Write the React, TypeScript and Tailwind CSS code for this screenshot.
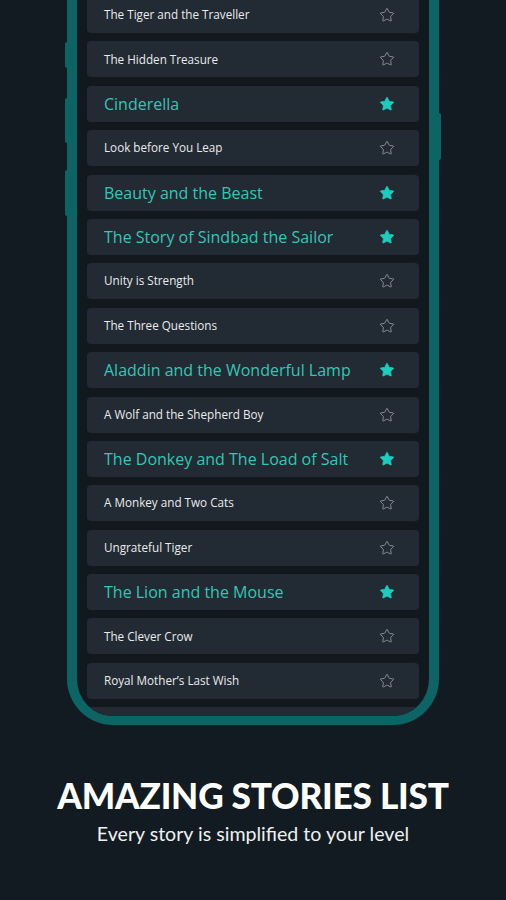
import { Star } from 'lucide-react';

interface Story {
  title: string;
  fav: boolean;
}

const stories: Story[] = [
  { title: 'The Tiger and the Traveller', fav: false },
  { title: 'The Hidden Treasure', fav: false },
  { title: 'Cinderella', fav: true },
  { title: 'Look before You Leap', fav: false },
  { title: 'Beauty and the Beast', fav: true },
  { title: 'The Story of Sindbad the Sailor', fav: true },
  { title: 'Unity is Strength', fav: false },
  { title: 'The Three Questions', fav: false },
  { title: 'Aladdin and the Wonderful Lamp', fav: true },
  { title: 'A Wolf and the Shepherd Boy', fav: false },
  { title: 'The Donkey and The Load of Salt', fav: true },
  { title: 'A Monkey and Two Cats', fav: false },
  { title: 'Ungrateful Tiger', fav: false },
  { title: 'The Lion and the Mouse', fav: true },
  { title: 'The Clever Crow', fav: false },
  { title: 'Royal Mother\u2019s Last Wish', fav: false },
  { title: '', fav: false },
];

function StoryRow({ story }: { story: Story }) {
  return (
    <div className="flex items-center justify-between h-[36px] shrink-0 rounded-[4px] bg-[#222a33] pl-[17px] pr-[24px]">
      {story.fav ? (
        <span className="text-[16px] text-[#34c6b6] leading-none">{story.title}</span>
      ) : (
        <span className="text-[11.7px] text-[#e9ebed] leading-none">{story.title}</span>
      )}
      {story.title &&
        (story.fav ? (
          <Star size={16} strokeWidth={1.2} className="text-[#1ccdbd] fill-[#1ccdbd]" />
        ) : (
          <Star size={16} strokeWidth={1.15} className="text-[#a3a8ad]" />
        ))}
    </div>
  );
}

export default function App() {
  return (
    <div className="h-[900px] w-full overflow-hidden bg-[#121b21] font-['Open_Sans',sans-serif]">
      {/* phone mockup */}
      <div className="relative mx-auto -mt-[3px] w-[372px] h-[728px]">
        {/* side buttons */}
        <div className="absolute -left-[2px] top-[45px] w-[3px] h-[26px] rounded-l-[2px] bg-[#0d6464]" />
        <div className="absolute -left-[2px] top-[101px] w-[3px] h-[45px] rounded-l-[2px] bg-[#0d6464]" />
        <div className="absolute -left-[2px] top-[173px] w-[3px] h-[46px] rounded-l-[2px] bg-[#0d6464]" />
        <div className="absolute -right-[2px] top-[116px] w-[3px] h-[47px] rounded-r-[2px] bg-[#0d6464]" />

        <div className="relative h-full overflow-hidden border-x-[10px] border-b-[9px] border-[#0d6464] rounded-b-[46px] bg-[#11191f]">
          <div className="flex flex-col gap-[8.4px] px-[10px]">
            {stories.map((s, i) => (
              <StoryRow key={i} story={s} />
            ))}
          </div>
        </div>
      </div>

      <div className="flex flex-col items-center font-['Lato',sans-serif] text-white">
        <h1 className="mt-[53px] text-[35.2px] font-black leading-none tracking-[-0.2px]">AMAZING STORIES LIST</h1>
        <p className="mt-[11px] text-[19.6px] leading-none text-[#eef0f1]">Every story is simplified to your level</p>
      </div>
    </div>
  );
}
